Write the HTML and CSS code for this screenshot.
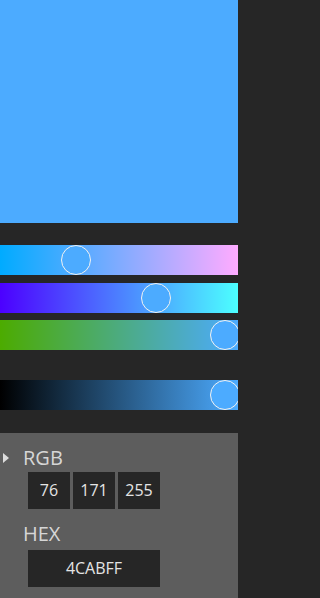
FILE: index.html
```html
<!DOCTYPE html>
<html>
<head>
<meta charset="utf-8">
<link rel="stylesheet" href="styles.css">
</head>
<body>
<div class="picker">
  <div class="preview"></div>
  <div class="sliders">
    <div class="track track-r"><span class="thumb" style="left:61px"></span></div>
    <div class="track track-g"><span class="thumb" style="left:141px"></span></div>
    <div class="track track-b"><span class="thumb" style="left:210px"></span></div>
    <div class="track track-v"><span class="thumb" style="left:210px"></span></div>
  </div>
  <div class="panel">
    <div class="head">
      <span class="caret"></span>
      <span class="label">RGB</span>
    </div>
    <div class="boxes">
      <div class="box">76</div>
      <div class="box">171</div>
      <div class="box">255</div>
    </div>
    <div class="label hex-label">HEX</div>
    <div class="box hex">4CABFF</div>
  </div>
</div>
</body>
</html>
```
FILE: styles.css
```css
html, body {
  margin: 0;
  padding: 0;
  background: #262626;
}
.picker {
  width: 238px;
  height: 598px;
  display: flex;
  flex-direction: column;
  overflow: hidden;
  font-family: "Open Sans", "Noto Sans", sans-serif;
}
.preview {
  height: 223px;
  background: #4cabff;
}
.sliders {
  height: 210px;
  padding-top: 22px;
  box-sizing: border-box;
  display: flex;
  flex-direction: column;
}
.track {
  position: relative;
  height: 30px;
  flex: none;
}
.track-r { background: linear-gradient(to right, rgb(0,171,255), rgb(255,171,255)); }
.track-g { background: linear-gradient(to right, rgb(76,0,255), rgb(76,255,255)); margin-top: 8px; }
.track-b { background: linear-gradient(to right, rgb(76,171,0), rgb(76,171,255)); margin-top: 7px; }
.track-v { background: linear-gradient(to right, rgb(0,0,0), rgb(76,171,255)); margin-top: 30px; }
.thumb {
  position: absolute;
  top: 0;
  width: 30px;
  height: 30px;
  box-sizing: border-box;
  border-radius: 50%;
  border: 1px solid #f2f2f2;
  background: #4cabff;
}
.panel {
  flex: 1;
  background: #5d5d5d;
  padding-top: 13px;
  color: #d6d6d6;
}
.head {
  display: flex;
  align-items: center;
  height: 24px;
}
.caret {
  width: 0;
  height: 0;
  margin-left: 3px;
  border-top: 5.5px solid transparent;
  border-bottom: 5.5px solid transparent;
  border-left: 6px solid #dcdcdc;
}
.label {
  font-size: 20px;
  line-height: 24px;
  color: #d6d6d6;
}
.head .label {
  margin-left: 14px;
}
.boxes {
  display: flex;
  gap: 3px;
  margin: 2px 0 0 28px;
}
.box {
  width: 42px;
  height: 37px;
  line-height: 37px;
  background: #262626;
  color: #e4e4e4;
  font-size: 16px;
  text-align: center;
}
.hex-label {
  margin: 13px 0 0 23px;
}
.hex {
  width: 132px;
  margin: 4px 0 0 28px;
}
```
